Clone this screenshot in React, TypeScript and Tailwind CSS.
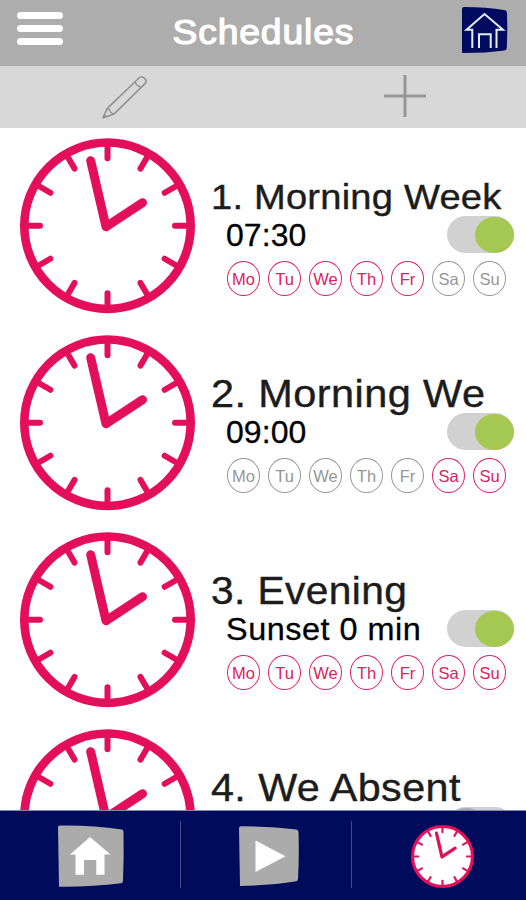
import clsx from "clsx";

type Schedule = {
  title: string;
  titleClass: string;
  time?: string;
  timeClass?: string;
  days?: string[];
  enabled: boolean;
};

const WEEK = ["Mo", "Tu", "We", "Th", "Fr", "Sa", "Su"];

const schedules: Schedule[] = [
  {
    title: "1. Morning Week",
    titleClass: "text-[35.5px] tracking-[0.2px] scale-x-[1.073] pt-[1px]",
    time: "07:30",
    timeClass: "scale-x-[1.03] tracking-[0.1px]",
    days: ["Mo", "Tu", "We", "Th", "Fr"],
    enabled: true,
  },
  {
    title: "2. Morning We",
    titleClass: "text-[39.5px] tracking-[0.4px] scale-x-[1.05]",
    time: "09:00",
    timeClass: "scale-x-[1.03] tracking-[0.1px]",
    days: ["Sa", "Su"],
    enabled: true,
  },
  {
    title: "3. Evening",
    titleClass: "text-[39.5px] tracking-[0.4px] scale-x-[1.03]",
    time: "Sunset 0 min",
    timeClass: "scale-x-[1.045] tracking-[0.5px]",
    days: WEEK,
    enabled: true,
  },
  {
    title: "4. We Absent",
    titleClass: "text-[39.5px] tracking-[0.4px] scale-x-[1.045]",
    enabled: false,
  },
];

function ClockIcon({ className, face = "none" }: { className?: string; face?: string }) {
  return (
    <svg viewBox="0 0 175 175" className={className} fill="none" stroke="#e30f5b" strokeLinecap="round">
      <circle cx="87.5" cy="87.5" r="83.2" strokeWidth="8.6" fill={face} />
      {Array.from({ length: 12 }, (_, i) => (
        <line
          key={i}
          x1="87.5"
          y1="6"
          x2="87.5"
          y2={i % 3 === 0 ? 20 : 21.5}
          strokeWidth="6"
          transform={`rotate(${i * 30} 87.5 87.5)`}
        />
      ))}
      <path d="M70.7 22.5 L86 88.5 L122.5 64.5" strokeWidth="9" strokeLinejoin="round" />
    </svg>
  );
}

function PencilIcon() {
  return (
    <svg viewBox="300 222 150 140" className="h-[46.67px] w-[50px]" fill="none" stroke="#929292" strokeWidth="4.8" strokeLinejoin="round">
      <path d="M309 353 L322 325 L417 234 Q424 227 431 233 L437 239 Q441 245 435 251 L341 343 Z" />
      <path d="M322 325 L328 328 L331 336 L341 343 M405 246 Q409 257 424 262" strokeWidth="4" />
      <path d="M309 353 L313 344 L319 349 Z" fill="#929292" strokeWidth="3" />
    </svg>
  );
}

function HomeBadge() {
  return (
    <svg viewBox="0 0 46 46" className="h-[46px] w-[46px]" fill="none">
      <path d="M0 2 Q0 0 2 0 Q24 0 43 3.3 Q44.8 3.6 45 6 Q45.8 23 44.8 41 Q44.6 43 42.5 43.5 Q24 46 1 46 Q0 46 0 45 Z" fill="#000b5f" />
      <path
        d="M10.3 41 V22.8 H4.5 L22.5 7 L41 22.8 H34.5 V41 M17 41 V27.3 H28.7 V41"
        stroke="#e4ecff"
        strokeWidth="2"
      />
    </svg>
  );
}

function Toggle({ on }: { on: boolean }) {
  return (
    <div className={clsx("flex h-[37px] w-[67px] items-center rounded-full bg-[#d1d1d1]", on ? "justify-end" : "justify-start")}>
      <div className={clsx("h-[36px] w-[39px] rounded-[50%]", on ? "bg-[#a5c852]" : "bg-[#acacac]")} />
    </div>
  );
}

function DayBadge({ label, active }: { label: string; active: boolean }) {
  return (
    <div
      className={clsx(
        "flex h-[35px] w-[33px] items-center justify-center rounded-[50%] border-[1.5px] pt-[1px] text-[16.5px]",
        active ? "border-[#e0205f] text-[#e0205f]" : "border-[#969696] text-[#969696]"
      )}
    >
      {label}
    </div>
  );
}

function ScheduleRow({ schedule }: { schedule: Schedule }) {
  const { title, titleClass, time, timeClass, days, enabled } = schedule;
  return (
    <div className="flex h-[197px] shrink-0 items-start">
      <ClockIcon className="mt-[10px] ml-[19.5px] h-[175.5px] w-[175px] shrink-0" />
      <div className="flex min-w-0 flex-1 flex-col pt-[46px] pl-[16.5px] whitespace-nowrap text-[#1c1c1c]">
        <div className={clsx("h-[42px] w-fit origin-left leading-[44px] [-webkit-text-stroke:0.4px_#1c1c1c]", titleClass)}>
          {title}
        </div>
        <div className="flex items-start justify-between pr-3 pl-[15px]">
          <div className={clsx("h-[37px] origin-left text-[31px] leading-[40px] text-black [-webkit-text-stroke:0.3px_#000]", timeClass)}>
            {time}
          </div>
          <Toggle on={enabled} />
        </div>
        {days ? (
          <div className="mt-2 flex gap-[8px] pl-[16px]">
            {WEEK.map((day) => (
              <DayBadge key={day} label={day} active={days.includes(day)} />
            ))}
          </div>
        ) : null}
      </div>
    </div>
  );
}

export default function App() {
  return (
    <div className="flex h-[900px] w-[526px] flex-col overflow-hidden bg-white font-['Liberation_Sans',Arial,sans-serif]">
      <header className="flex h-[66px] shrink-0 items-start justify-between bg-[#adadad] pr-[18px] pl-[17px]">
        <div className="flex w-[46px] flex-col gap-[5.5px] pt-[11.5px]">
          <div className="h-[7.5px] rounded-full bg-white" />
          <div className="h-[7.5px] rounded-full bg-white" />
          <div className="h-[7.5px] rounded-full bg-white" />
        </div>
        <h1 className="scale-x-[1.065] pt-[12px] pl-px text-[35px] leading-[40px] font-normal tracking-[0.8px] text-white [-webkit-text-stroke:1.2px_#fff]">
          Schedules
        </h1>
        <div className="pt-[7px]">
          <HomeBadge />
        </div>
      </header>

      <div className="flex h-[62px] shrink-0 items-start bg-[#d8d8d8]">
        <div className="pt-[8px] pl-[100px]">
          <PencilIcon />
        </div>
        <svg viewBox="0 0 42 42" className="mt-[9px] ml-[234px] h-[42px] w-[42px]" stroke="#969696" strokeWidth="3">
          <path d="M21 0 V42 M0 21 H42" />
        </svg>
      </div>

      <main className="flex min-h-0 flex-1 flex-col overflow-hidden">
        {schedules.map((schedule) => (
          <ScheduleRow key={schedule.title} schedule={schedule} />
        ))}
      </main>

      <footer className="flex h-[90px] shrink-0 items-start border-t border-[#8286ad] bg-[#000b5c] pt-[10px]">
        <div className="flex w-[180px] justify-center pt-[4px] pl-[2px]">
          <svg viewBox="0 0 66 62" className="h-[62px] w-[66px]">
            <path d="M0 2 Q0 .5 2 .5 Q34 0 64 4.5 Q65.5 5 65.5 7 Q66 32 65 56 Q65 58 63 58.3 Q34 62 1 61.7 Z" fill="#ababab" />
            <path d="M32 12 L52.5 29.5 H46.5 V49.7 H38.3 V35 H26 V49.7 H17.5 V29.5 H12 Z" fill="#fff" />
          </svg>
        </div>
        <div className="h-[67px] w-px bg-[#454b85]" />
        <div className="flex w-[170px] justify-center pt-[5px] pl-[6px]">
          <svg viewBox="0 0 60 60" className="h-[60px] w-[60px]">
            <path d="M0 2 Q0 .3 2 .3 Q32 .5 57.5 3.5 Q59.5 4 59.5 6 Q60.3 30 59 53 Q59 55 57 55.3 Q32 59.5 1 60 Z" fill="#ababab" />
            <path d="M16.5 14.5 L46.5 30.3 L16.5 46 Z" fill="#fff" />
          </svg>
        </div>
        <div className="h-[67px] w-px bg-[#454b85]" />
        <div className="flex flex-1 justify-center pt-[4px] pl-[7px]">
          <ClockIcon className="h-[63px] w-[63px]" face="#fff" />
        </div>
      </footer>
    </div>
  );
}
